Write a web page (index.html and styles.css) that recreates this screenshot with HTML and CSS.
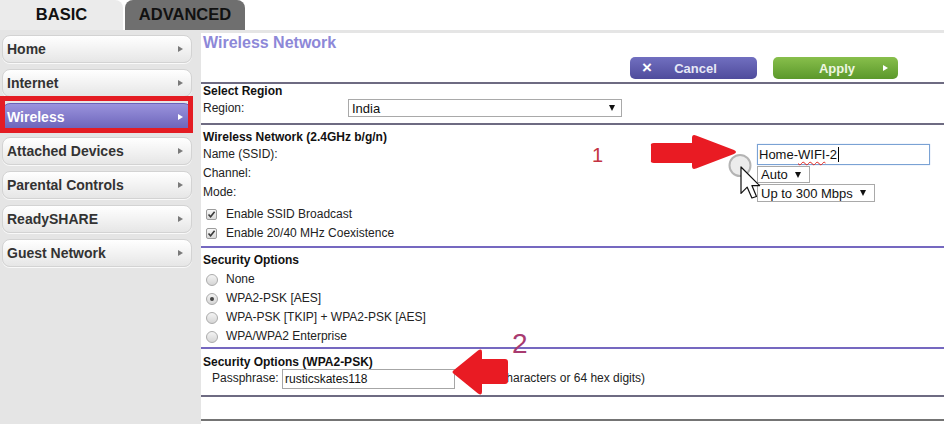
FILE: index.html
```html
<!DOCTYPE html>
<html>
<head>
    <title>Wireless Settings</title>
    <link rel="stylesheet" href="styles.css">
</head>
<body>
    <div class="tabs">
        <div class="tab basic">BASIC</div>
        <div class="tab advanced">ADVANCED</div>
    </div>

    <div class="page">
        <div class="menu">
            <div class="menu-item">Home<span class="arr"></span></div>
            <div class="menu-item">Internet<span class="arr"></span></div>
            <div class="menu-item selected">Wireless<span class="arr"></span></div>
            <div class="menu-item">Attached Devices<span class="arr"></span></div>
            <div class="menu-item">Parental Controls<span class="arr"></span></div>
            <div class="menu-item">ReadySHARE<span class="arr"></span></div>
            <div class="menu-item">Guest Network<span class="arr"></span></div>
        </div>

        <div class="content">
            <div class="title">Wireless Network</div>
            <div class="actions">
                <div class="btn cancel"><span class="x">&times;</span><span class="lbl">Cancel</span></div>
                <div class="btn apply"><span class="lbl">Apply</span><span class="go"></span></div>
            </div>

            <div class="rule top"></div>
            <div class="section region-sec">
                <h3>Select Region</h3>
                <div class="region-row">
                    <span class="region-label">Region:</span>
                    <div class="select region">India<span class="caret"></span></div>
                </div>
            </div>

            <div class="rule"></div>
            <div class="section wifi-sec">
                <h3>Wireless Network (2.4GHz b/g/n)</h3>
                <div class="fields">
                    <div class="labels">
                        <div>Name (SSID):</div>
                        <div>Channel:</div>
                        <div>Mode:</div>
                    </div>
                    <div class="controls">
                        <div class="text-in ssid"><span>Home-<span class="spell">WIFI</span>-2</span><span class="text-caret"></span></div>
                        <div class="select chan">Auto<span class="caret"></span></div>
                        <div class="select mode">Up to 300 Mbps<span class="caret"></span></div>
                    </div>
                </div>
                <div class="opts">
                    <div class="opt"><span class="chk"><svg width="9" height="9" viewBox="0 0 9 9"><path d="M1.5 4.5 L3.6 6.8 L7.6 1.8" fill="none" stroke="#3a3a3a" stroke-width="1.6"/></svg></span>Enable SSID Broadcast</div>
                    <div class="opt"><span class="chk"><svg width="9" height="9" viewBox="0 0 9 9"><path d="M1.5 4.5 L3.6 6.8 L7.6 1.8" fill="none" stroke="#3a3a3a" stroke-width="1.6"/></svg></span>Enable 20/40 MHz Coexistence</div>
                </div>
            </div>

            <div class="rule purple"></div>
            <div class="section sec-sec">
                <h3>Security Options</h3>
                <div class="opts">
                    <div class="opt"><span class="radio"></span>None</div>
                    <div class="opt"><span class="radio on"></span>WPA2-PSK [AES]</div>
                    <div class="opt"><span class="radio"></span>WPA-PSK [TKIP] + WPA2-PSK [AES]</div>
                    <div class="opt"><span class="radio"></span>WPA/WPA2 Enterprise</div>
                </div>
            </div>

            <div class="rule purple"></div>
            <div class="section psk-sec">
                <h3>Security Options (WPA2-PSK)</h3>
                <div class="pass-row">
                    <span class="pass-label">Passphrase:</span>
                    <div class="text-in pass">rusticskates118</div>
                    <span class="hint">(8-63 characters or 64 hex digits)</span>
                </div>
            </div>

            <div class="rule"></div>
            <div class="blank"></div>
            <div class="rule gray"></div>
        </div>
    </div>

    <!-- hand-drawn markers on top of the page -->
    <div class="mark"></div>
    <span class="num one">1</span>
    <span class="num two">2</span>
    <svg class="ann" width="944" height="424" viewBox="0 0 944 424">
        <path d="M651 146 Q650 143 654 143 L692 143 L692 138 Q692 134 696 135.5 L734 150 Q738 152 734 154 L696 168.5 Q692 170 692 166 L692 163 L654 163 Q650 163 651 160 Z" fill="#e91b23"/>
        <path d="M454 370 L478 350.5 Q482 348 482 352 L482 359 L505 359 Q508 359 508 362 L508 381 Q508 384 505 384 L482 384 L482 392 Q482 396 478 393.5 L454 374 Q451 372 454 370 Z" fill="#e91b23"/>
        <circle cx="740" cy="165.5" r="10.5" fill="#e4e4e4" fill-opacity="0.7" stroke="#b4b4b4" stroke-width="2"/>
        <path d="M741 167 L741 193.4 L747.2 187.2 L751.9 198 L756.5 196.5 L751.9 185.6 L759.6 185.6 Z" fill="#fff" stroke="#111" stroke-width="1.2" stroke-linejoin="round"/>
    </svg>
</body>
</html>
```

FILE: styles.css
```css
body {
    margin: 0;
    font-family: "Liberation Sans", Arial, sans-serif;
    font-size: 12px;
    color: #222;
    background: #fff;
    position: relative;
    height: 424px;
    overflow: hidden;
}

/* top tabs */
.tabs {
    display: flex;
    height: 30px;
    background: #fff;
}
.tab {
    width: 120px;
    height: 30px;
    box-sizing: border-box;
    padding-bottom: 2px;
    line-height: 28px;
    text-align: center;
    font-size: 16.5px;
    font-weight: bold;
    color: #111;
    border-radius: 8px 8px 0 0;
}
.basic {
    width: 123px;
    background: #ebebeb;
    border-radius: 0 8px 0 0;
}
.advanced {
    margin-left: 2px;
    background: #6f6f6f;
}

.page {
    display: flex;
    height: 394px;
    background: #e5e5e5;
}

/* left menu */
.menu {
    width: 201px;
    flex: none;
    padding-top: 5px;
    box-sizing: border-box;
    display: flex;
    flex-direction: column;
    gap: 6px;
}
.menu-item {
    margin-left: 2px;
    width: 190px;
    height: 28px;
    box-sizing: border-box;
    border: 1px solid #d3d3d3;
    border-radius: 8px;
    background: linear-gradient(#ffffff, #e6e6e6);
    box-shadow: 0 1px 0 #f9f9f9;
    display: flex;
    align-items: center;
    justify-content: space-between;
    padding: 0 8px 0 4px;
    font-size: 14px;
    font-weight: bold;
    color: #333;
}
.arr {
    width: 0;
    height: 0;
    border-left: 5px solid #7a7a7a;
    border-top: 3.5px solid transparent;
    border-bottom: 3.5px solid transparent;
}
.menu-item.selected {
    background: linear-gradient(#9a93dd, #6a62b8);
    border-color: #6a62b8;
    color: #fff;
}
.menu-item.selected .arr { border-left-color: #fff; }

/* main panel */
.content {
    flex: 1;
    background: #fff;
    margin-top: 3px;
}
.title {
    font-size: 16px;
    font-weight: bold;
    line-height: 20px;
    color: #8d88d8;
    padding-left: 2px;
}
.actions {
    display: flex;
    justify-content: flex-end;
    gap: 16px;
    padding-right: 46px;
    margin-top: 4px;
}
.btn {
    height: 22px;
    box-sizing: border-box;
    border-radius: 5px;
    display: flex;
    align-items: center;
    font-size: 13px;
    font-weight: bold;
    color: #e6e8f6;
}
.btn .lbl { flex: 1; text-align: center; }
.cancel {
    width: 127px;
    padding: 0 16px 0 12px;
    background: linear-gradient(#716fc0, #4f4c9c);
}
.cancel .x {
    width: 8px;
    font-size: 17px;
    color: #fff;
}
.apply {
    width: 125px;
    padding: 0 10px 0 18px;
    background: linear-gradient(#88bf4c, #5b982b);
    color: #eef6e2;
}
.apply .go {
    width: 0;
    height: 0;
    border-left: 5px solid #fff;
    border-top: 3.5px solid transparent;
    border-bottom: 3.5px solid transparent;
}

.rule { height: 2px; background: #6e6b82; }
.rule.top { margin-top: 3px; }
.rule.purple { background: #7568c0; }
.rule.gray { background: #747474; }
.blank { height: 22px; }

.section { padding: 0 2px; }
.section h3 {
    margin: 0;
    font-size: 12px;
    line-height: 14px;
    color: #111;
}

.region-sec { padding-bottom: 6px; }
.region-row {
    display: flex;
    align-items: center;
    margin-top: 1px;
}
.region-label { width: 145px; }

.select {
    display: flex;
    align-items: center;
    gap: 7px;
    height: 18px;
    box-sizing: border-box;
    border: 1px solid #a9a9a9;
    padding: 0 8px 0 3px;
    font-size: 13px;
    color: #111;
    background: #fff;
}
.select.region {
    width: 274px;
    justify-content: space-between;
    padding-right: 6px;
}
.select.chan { height: 17px; margin-top: 1px; }
.select.mode { margin-top: 1px; }
.caret {
    width: 0;
    height: 0;
    border-left: 3.5px solid transparent;
    border-right: 3.5px solid transparent;
    border-top: 6px solid #111;
}

.wifi-sec { padding-top: 5px; padding-bottom: 3px; }
.fields { display: flex; }
.labels { width: 554px; padding-top: 1px; }
.labels div { line-height: 19px; }
.controls {
    display: flex;
    flex-direction: column;
    align-items: flex-start;
}

.text-in {
    height: 21px;
    box-sizing: border-box;
    border: 1px solid #a6a6a6;
    padding-left: 1px;
    display: flex;
    align-items: center;
    color: #111;
    background: #fff;
}
.ssid {
    width: 173px;
    font-size: 13px;
    border-color: #7aa2d4;
    box-shadow: 0 0 1px #a9c5ea;
}
.spell {
    text-decoration: underline wavy #e2231c;
    text-decoration-thickness: 1px;
    text-underline-offset: 2px;
}
.text-caret {
    width: 1px;
    height: 15px;
    background: #000;
    margin-left: 1px;
}

.opts { margin-top: 3px; }
.opt {
    display: flex;
    align-items: center;
    line-height: 19px;
    padding-left: 3px;
}
.chk {
    width: 11px;
    height: 11px;
    box-sizing: border-box;
    border: 1px solid #9c9c9c;
    border-radius: 2px;
    background: linear-gradient(#f7f7f7, #d9d9d9);
    margin-right: 9px;
    display: flex;
    align-items: center;
    justify-content: center;
}
.radio {
    width: 12px;
    height: 12px;
    box-sizing: border-box;
    border: 1px solid #ababab;
    border-radius: 50%;
    background: linear-gradient(#f4f4f4, #d5d5d5);
    margin-right: 8px;
    display: flex;
    align-items: center;
    justify-content: center;
}
.radio.on::after {
    content: "";
    width: 4px;
    height: 4px;
    border-radius: 50%;
    background: #444;
}

.sec-sec { padding-top: 5px; padding-bottom: 1px; }

.psk-sec { padding-top: 6px; padding-bottom: 6px; }
.pass-row {
    display: flex;
    align-items: center;
    padding-left: 9px;
}
.pass-label { width: 70px; padding-bottom: 2px; }
.pass {
    width: 173px;
    height: 20px;
    padding-left: 2px;
    font-size: 12px;
}
.hint { margin-left: 14px; padding-bottom: 2px; }

/* annotations */
.mark {
    position: absolute;
    left: 0;
    top: 96px;
    width: 193px;
    height: 37px;
    box-sizing: border-box;
    border: 5px solid #e41c23;
}
.num {
    position: absolute;
    font-family: "Liberation Sans", Arial, sans-serif;
}
.num.one {
    left: 592px;
    top: 145px;
    font-size: 20px;
    line-height: 20px;
    color: #c43342;
}
.num.two {
    left: 512px;
    top: 330px;
    font-size: 28px;
    line-height: 28px;
    color: #a83b70;
}
.ann {
    position: absolute;
    left: 0;
    top: 0;
    pointer-events: none;
}
```
